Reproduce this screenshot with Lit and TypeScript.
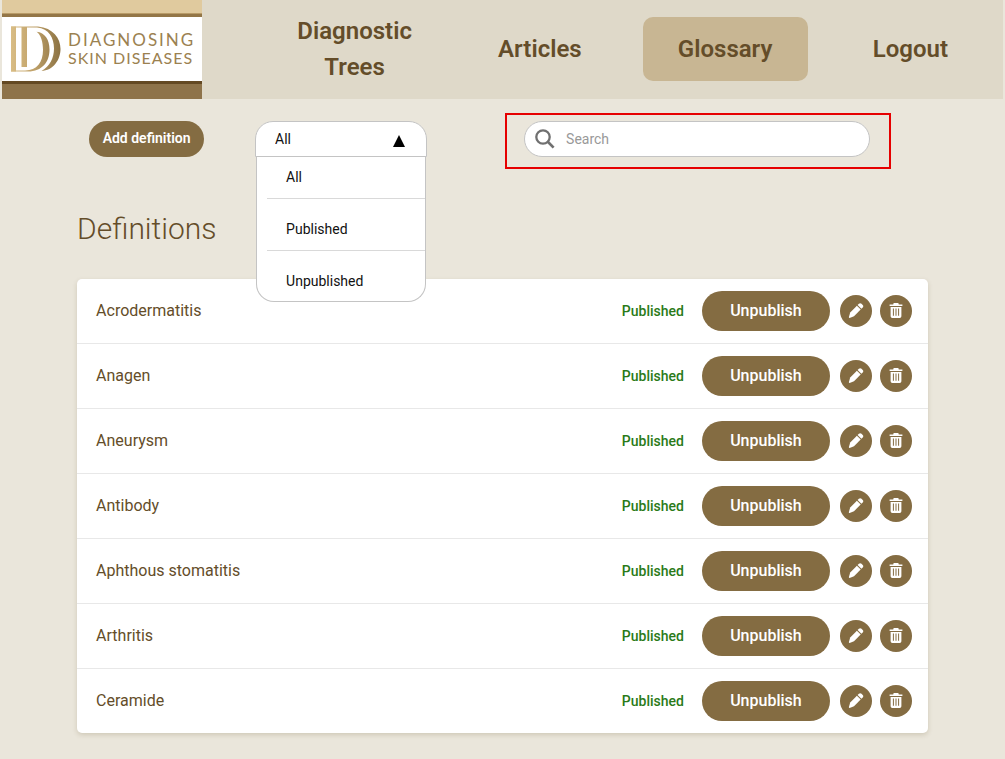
import { LitElement, html, css, svg } from "lit";
import { customElement, property, state } from "lit/decorators.js";
import { classMap } from "lit/directives/class-map.js";

const NAV = ["Diagnostic Trees", "Articles", "Glossary", "Logout"];
const FILTERS = ["All", "Published", "Unpublished"];
const TERMS = [
  "Acrodermatitis",
  "Anagen",
  "Aneurysm",
  "Antibody",
  "Aphthous stomatitis",
  "Arthritis",
  "Ceramide",
];

const pencil = svg`
  <path d="M.9 14.100 L2.200 9.400 L8.900 2.700 L12.700 6.500 L6 13.200 L1.600 14.900 Q.7 15 .9 14.100 Z" />
  <path d="M9.600 2 L10.900 .8 Q12.200 -.3 13.500 .8 L14.700 2 Q15.800 3.200 14.700 4.600 L13.400 5.800 Z" />`;

const bin = svg`
  <path d="M1.6 1.400 H5.3 V1 Q5.3 .1 6.2 .1 H9.8 Q10.7 .1 10.7 1 V1.400 H14.4 V3.1 H1.6 Z" />
  <path fill-rule="evenodd" d="M2.6 4 H13.4 V13.2 Q13.4 14.9 11.7 14.9 H4.3 Q2.6 14.9 2.6 13.2 Z M4.9 5.6 V12.8 H5.9 V5.6 Z M7.5 5.6 V12.8 H8.5 V5.6 Z M10.1 5.6 V12.8 H11.1 V5.6 Z" />`;

@customElement("site-logo")
class SiteLogo extends LitElement {
  static styles = css`
    :host {
      display: flex;
      flex-direction: column;
      box-sizing: border-box;
      width: 200px;
      flex: none;
    }
    .top {
      height: 13px;
      background: #e0ca9e;
      border-bottom: 1px solid #b89b68;
    }
    .rule {
      height: 3px;
      background: #937647;
    }
    .mark {
      display: flex;
      align-items: center;
      gap: 7px;
      height: 64px;
      padding-left: 9px;
      background: #fff;
    }
    .mark svg {
      display: block;
      flex: none;
    }
    .words {
      font-family: Lato, sans-serif;
      color: #9b8150;
      white-space: nowrap;
      letter-spacing: 2px;
    }
    .line {
      display: block;
      font-size: 17px;
      line-height: 18px;
    }
    .small {
      font-size: 16px;
      letter-spacing: 1px;
    }
    .bottom {
      height: 15px;
      background: #8e734a;
      border-top: 3px solid #644923;
    }
  `;

  render() {
    return html`
      <div class="top"></div>
      <div class="rule"></div>
      <div class="mark">
        <svg width="50" height="46" viewBox="0 0 50 46" aria-hidden="true">
          <defs>
            <linearGradient id="v" gradientUnits="userSpaceOnUse" x1="0" x2="50" y1="0" y2="0">
              <stop offset="0" stop-color="#d9bd85" />
              <stop offset=".45" stop-color="#c0a26a" />
              <stop offset="1" stop-color="#8b7142" />
            </linearGradient>
          </defs>
          <g fill="url(#v)">
            <rect x="0" y=".5" width="5" height="45" />
            <rect x="10.500" y="1" width="5.500" height="40" />
            <path d="M0 .5 H27 C42 2 49.500 12 49.500 23 C49.500 34 42 44.500 30.500 45 C39 40 43 32 43 22.500 C43 12 38 2.500 26 1.500 H0 Z" />
            <path d="M25.500 5.800 C34 6.500 38.500 14 38.500 23.500 C38.500 36 31 45.500 17 45.500 H0 V44.500 H14 C26 44.500 32 36 32 24 C32 16 30 9 25.500 5.800 Z" />
          </g>
        </svg>
        <div class="words">
          <span class="line">DIAGNOSING</span>
          <span class="line small">SKIN DISEASES</span>
        </div>
      </div>
      <div class="bottom"></div>
    `;
  }
}

@customElement("status-filter")
class StatusFilter extends LitElement {
  @state() private open = true;
  @state() private value = "All";

  static styles = css`
    :host {
      display: block;
      position: relative;
      width: 172px;
      font-size: 14px;
      color: #111;
    }
    .select {
      display: block;
      box-sizing: border-box;
      width: 100%;
      height: 36px;
      padding: 0 20px 0 19px;
      border: 1px solid #c4c4c4;
      border-radius: 18px;
      background: #fff;
      color: inherit;
      font: inherit;
      appearance: none;
      outline: none;
    }
    .open {
      border-radius: 18px 18px 0 0;
    }
    .arrow {
      position: absolute;
      right: 22px;
      top: 14px;
      pointer-events: none;
    }
    .menu {
      position: absolute;
      z-index: 2;
      top: 36px;
      left: 1px;
      right: 1px;
      margin: 0;
      padding: 0 0 0 10px;
      list-style: none;
      background: #fff;
      border: 1px solid #c4c4c4;
      border-top: 0;
      border-radius: 0 0 18px 18px;
    }
    .option {
      padding: 20px 19px 11px;
      line-height: 20px;
      border-bottom: 1px solid #d9d9d9;
      cursor: pointer;
    }
    .option:first-child {
      padding-top: 10px;
    }
    .option:last-child {
      padding-bottom: 10px;
      border-bottom: 0;
    }
  `;

  private toggle(e: Event) {
    e.preventDefault();
    this.open = !this.open;
  }

  private pick(v: string) {
    this.value = v;
    this.open = false;
  }

  render() {
    return html`
      <select
        class=${classMap({ select: true, open: this.open })}
        aria-label="Status"
        .value=${this.value}
        @mousedown=${this.toggle}
        @change=${(e: Event) => this.pick((e.target as HTMLSelectElement).value)}
      >
        ${FILTERS.map((f) => html`<option ?selected=${f === this.value}>${f}</option>`)}
      </select>
      <svg class="arrow" width="12" height="12" viewBox="0 0 12 12" aria-hidden="true">
        <path d=${this.open ? "M6 0 L12 12 H0 Z" : "M6 12 L12 0 H0 Z"} />
      </svg>
      ${this.open
        ? html`<ul class="menu" role="listbox" aria-label="Status">
            ${FILTERS.map(
              (f) => html`<li
                class="option"
                role="option"
                aria-selected=${f === this.value}
                @click=${() => this.pick(f)}
              >${f}</li>`
            )}
          </ul>`
        : ""}
    `;
  }
}

@customElement("term-row")
class TermRow extends LitElement {
  @property() term = "";

  static styles = css`
    :host {
      display: flex;
      align-items: center;
      height: 64px;
      padding: 0 16px 0 19px;
    }
    .name {
      flex: 1;
      padding-bottom: 2px;
      font-size: 16px;
      color: #644d29;
      font-weight: 400;
    }
    .status {
      margin-right: 18px;
      font-size: 14px;
      font-weight: 500;
      color: #2a7a18;
    }
    .btn {
      display: flex;
      align-items: center;
      justify-content: center;
      padding: 0;
      border: 0;
      background: #846c42;
      color: #fff;
      font: inherit;
      cursor: pointer;
    }
    .toggle {
      width: 128px;
      height: 40px;
      margin-right: 10px;
      padding-bottom: 2px;
      border-radius: 20px;
      font-size: 16px;
      font-weight: 500;
    }
    .round {
      width: 32px;
      height: 32px;
      border-radius: 50%;
    }
    .round + .round {
      margin-left: 8px;
    }
    .round svg {
      fill: #fff;
    }
  `;

  render() {
    return html`
      <span class="name">${this.term}</span>
      <span class="status">Published</span>
      <button class="btn toggle">Unpublish</button>
      <button class="btn round" aria-label="Edit ${this.term}">
        <svg width="16" height="16" viewBox="0 0 16 16">${pencil}</svg>
      </button>
      <button class="btn round" aria-label="Delete ${this.term}">
        <svg width="16" height="16" viewBox="0 0 16 16">${bin}</svg>
      </button>
    `;
  }
}

@customElement("app-root")
class AppRoot extends LitElement {
  static styles = css`
    :host {
      display: block;
      box-sizing: border-box;
      min-height: 100vh;
      padding: 0 2px 24px;
      background: #eae6db;
      color: #644d29;
      font-family: Roboto, sans-serif;
    }
    .header {
      display: flex;
      background: #dfd9c9;
    }
    .nav {
      display: flex;
      flex: 1;
      align-items: center;
      gap: 20px;
      padding: 0 10px 2px 70px;
    }
    .link {
      display: flex;
      flex: 1 1 0;
      box-sizing: border-box;
      min-height: 64px;
      padding: 0 20px;
      align-items: center;
      justify-content: center;
      border-radius: 10px;
      color: #644d29;
      font-size: 24px;
      font-weight: 600;
      line-height: 36px;
      text-align: center;
      text-decoration: none;
    }
    .current {
      background: #c8b693;
    }
    .content {
      width: 85%;
      margin: 0 auto;
    }
    .toolbar {
      display: flex;
      align-items: flex-start;
      padding: 14px 37px 0 12px;
    }
    .add {
      width: 115px;
      height: 36px;
      margin: 8px 51px 0 0;
      padding: 0 0 2px;
      border: 0;
      border-radius: 18px;
      background: #846c42;
      color: #fff;
      font: inherit;
      font-size: 14px;
      font-weight: 600;
      white-space: nowrap;
    }
    .filter {
      flex: none;
      margin: 8px 78px 0 0;
    }
    .frame {
      flex: 1;
      padding: 6px 19px 10px 17px;
      border: 2px solid #e60000;
    }
    .search {
      display: flex;
      align-items: center;
      gap: 11px;
      box-sizing: border-box;
      height: 36px;
      padding: 0 18px 0 10px;
      border: 1px solid #c4c4c4;
      border-radius: 18px;
      background: #fff;
    }
    .search svg {
      flex: none;
    }
    .input {
      flex: 1;
      min-width: 0;
      padding: 0;
      border: 0;
      outline: 0;
      background: none;
      color: #333;
      font: inherit;
      font-size: 14px;
    }
    .input::placeholder {
      color: #999;
      opacity: 1;
    }
    .title {
      margin: 40px 0 30px;
      font-size: 30px;
      font-weight: 300;
      line-height: 40px;
    }
    .list {
      margin: 0;
      padding: 0;
      list-style: none;
      background: #fff;
      border-radius: 5px;
      box-shadow: 0 2px 5px rgba(90, 70, 30, 0.18);
    }
    .item + .item {
      border-top: 1px solid #e8e8e8;
    }
  `;

  render() {
    return html`
      <header class="header">
        <site-logo></site-logo>
        <nav class="nav">
          ${NAV.map(
            (n) => html`<a class=${classMap({ link: true, current: n === "Glossary" })} href="#">${n}</a>`
          )}
        </nav>
      </header>
      <main class="content">
        <div class="toolbar">
          <button class="add">Add definition</button>
          <status-filter class="filter"></status-filter>
          <div class="frame">
            <label class="search">
              <svg width="20" height="20" viewBox="0 0 20 20" fill="none" stroke="#707070" aria-hidden="true">
                <circle cx="8" cy="8" r="6.700" stroke-width="2.300" />
                <path d="M12.800 12.800 L18.600 18.600" stroke-width="2.700" />
              </svg>
              <input class="input" type="search" placeholder="Search" aria-label="Search" />
            </label>
          </div>
        </div>
        <h1 class="title">Definitions</h1>
        <ul class="list">
          ${TERMS.map((t) => html`<li class="item"><term-row .term=${t}></term-row></li>`)}
        </ul>
      </main>
    `;
  }
}
